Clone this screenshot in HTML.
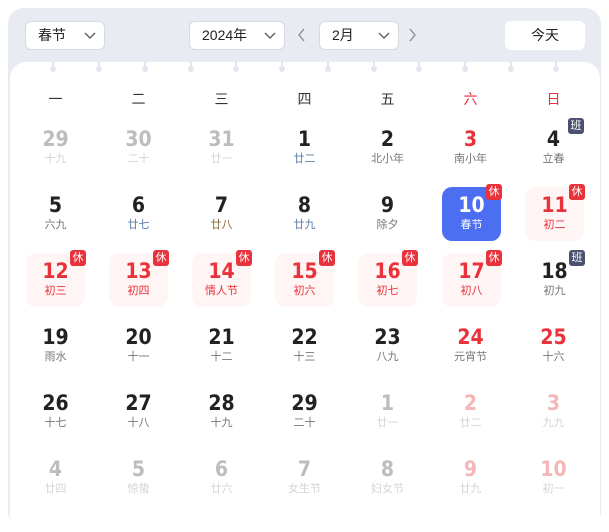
<!DOCTYPE html><html><head><meta charset="utf-8"><style>
*{margin:0;padding:0;box-sizing:border-box}
body{width:609px;height:513px;background:#fff;font-family:"Liberation Sans","Noto Sans CJK SC",sans-serif;position:relative;overflow:hidden}
.outer{position:absolute;left:8px;top:8px;width:593px;height:520px;background:#e8ebf2;border-radius:16px}
.card{position:absolute;left:10px;top:62px;width:590px;height:470px;background:#fff;border-radius:16px}
.sel{position:absolute;top:21px;height:29px;background:#fff;border:1px solid #d6d9e2;border-radius:6px;font-size:14px;color:#222;line-height:27px;padding-left:12px}
.sel svg{position:absolute;right:8px;top:10px}
.arr{position:absolute;top:28px}
.dot{position:absolute;top:62px;width:6px;height:11px}
.dot:before{content:"";position:absolute;left:2px;top:0;width:2px;height:6px;background:#e3e6ed}
.dot:after{content:"";position:absolute;left:0;top:4px;width:6px;height:6px;border-radius:50%;background:#e3e6ed}
.wk{position:absolute;top:89px;width:83px;text-align:center;font-size:14px;color:#333}
.c{position:absolute;width:59px;height:54px;text-align:center;border-radius:10px}
.c b{display:block;font-size:21px;line-height:26px;margin-top:5px;color:#222;font-family:"DejaVu Sans Condensed","Liberation Sans",sans-serif;font-weight:bold}
.c i{display:block;font-style:normal;font-size:11px;line-height:14px;color:#777}
.g b{color:#bdbdbd}.g i{color:#d4d4d4}
.gr b{color:#f4b6b6}.gr i{color:#d4d4d4}
.r b{color:#e8323c}
.h{background:#fff5f4}.h b{color:#e8323c}.h i{color:#e8323c}
.bl i{color:#5b7fa6}
.t{background:#4c6ef0}.t b,.t i{color:#fff}
.bg{position:absolute;right:-1px;top:-3px;width:16px;height:16px;border-radius:3px;background:#e8323c;color:#fff;font-size:11px;line-height:16px;font-style:normal}
.ban{background:#4b5270}
</style></head><body>
<div class="outer"></div>
<div class="sel" style="left:25px;width:80px">春节<svg width="12" height="8"><path d="M1 1l5 5 5-5" stroke="#555" fill="none" stroke-width="1.3"/></svg></div>
<div class="sel" style="left:189px;width:96px">2024年<svg width="12" height="8"><path d="M1 1l5 5 5-5" stroke="#555" fill="none" stroke-width="1.3"/></svg></div>
<svg class="arr" style="left:298px" width="8" height="14"><path d="M6 1L1 7l5 6" stroke="#888" fill="none" stroke-width="1.3"/></svg>
<div class="sel" style="left:319px;width:80px">2月<svg width="12" height="8"><path d="M1 1l5 5 5-5" stroke="#555" fill="none" stroke-width="1.3"/></svg></div>
<svg class="arr" style="left:409px" width="8" height="14"><path d="M1 1l5 6-5 6" stroke="#888" fill="none" stroke-width="1.3"/></svg>
<div class="sel" style="left:505px;width:80px;border-color:#fff;text-align:center;padding:0">今天</div>
<div class="card"></div>
<div class="dot" style="left:50px"></div><div class="dot" style="left:96px"></div><div class="dot" style="left:142px"></div><div class="dot" style="left:188px"></div><div class="dot" style="left:233px"></div><div class="dot" style="left:279px"></div><div class="dot" style="left:325px"></div><div class="dot" style="left:371px"></div><div class="dot" style="left:416px"></div><div class="dot" style="left:462px"></div><div class="dot" style="left:508px"></div><div class="dot" style="left:553px"></div>
<div class="wk" style="left:14px">一</div><div class="wk" style="left:97px">二</div><div class="wk" style="left:180px">三</div><div class="wk" style="left:263px">四</div><div class="wk" style="left:346px">五</div><div class="wk" style="left:429px;color:#e8323c">六</div><div class="wk" style="left:512px;color:#e8323c">日</div>

<div class="c g" style="left:26px;top:121px"><b>29</b><i>十九</i></div>
<div class="c g" style="left:109px;top:121px"><b>30</b><i>二十</i></div>
<div class="c g" style="left:192px;top:121px"><b>31</b><i>廿一</i></div>
<div class="c bl" style="left:275px;top:121px"><b>1</b><i>廿二</i></div>
<div class="c" style="left:358px;top:121px"><b>2</b><i>北小年</i></div>
<div class="c r" style="left:441px;top:121px"><b>3</b><i>南小年</i></div>
<div class="c" style="left:524px;top:121px"><b>4</b><i>立春</i><em class="bg ban">班</em></div>

<div class="c" style="left:26px;top:187px"><b>5</b><i>六九</i></div>
<div class="c bl" style="left:109px;top:187px"><b>6</b><i>廿七</i></div>
<div class="c" style="left:192px;top:187px"><b>7</b><i style="color:#8a6a3a">廿八</i></div>
<div class="c bl" style="left:275px;top:187px"><b>8</b><i>廿九</i></div>
<div class="c" style="left:358px;top:187px"><b>9</b><i>除夕</i></div>
<div class="c t" style="left:442px;top:187px"><b>10</b><i>春节</i><em class="bg">休</em></div>
<div class="c h" style="left:525px;top:187px"><b>11</b><i>初二</i><em class="bg">休</em></div>

<div class="c h" style="left:26px;top:253px"><b>12</b><i>初三</i><em class="bg">休</em></div>
<div class="c h" style="left:109px;top:253px"><b>13</b><i>初四</i><em class="bg">休</em></div>
<div class="c h" style="left:192px;top:253px"><b>14</b><i>情人节</i><em class="bg">休</em></div>
<div class="c h" style="left:275px;top:253px"><b>15</b><i>初六</i><em class="bg">休</em></div>
<div class="c h" style="left:358px;top:253px"><b>16</b><i>初七</i><em class="bg">休</em></div>
<div class="c h" style="left:442px;top:253px"><b>17</b><i>初八</i><em class="bg">休</em></div>
<div class="c" style="left:525px;top:253px"><b>18</b><i>初九</i><em class="bg ban">班</em></div>

<div class="c" style="left:26px;top:319px"><b>19</b><i>雨水</i></div>
<div class="c" style="left:109px;top:319px"><b>20</b><i>十一</i></div>
<div class="c" style="left:192px;top:319px"><b>21</b><i>十二</i></div>
<div class="c" style="left:275px;top:319px"><b>22</b><i>十三</i></div>
<div class="c" style="left:358px;top:319px"><b>23</b><i>八九</i></div>
<div class="c r" style="left:441px;top:319px"><b>24</b><i>元宵节</i></div>
<div class="c r" style="left:524px;top:319px"><b>25</b><i>十六</i></div>

<div class="c" style="left:26px;top:385px"><b>26</b><i>十七</i></div>
<div class="c" style="left:109px;top:385px"><b>27</b><i>十八</i></div>
<div class="c" style="left:192px;top:385px"><b>28</b><i>十九</i></div>
<div class="c" style="left:275px;top:385px"><b>29</b><i>二十</i></div>
<div class="c g" style="left:358px;top:385px"><b>1</b><i>廿一</i></div>
<div class="c gr" style="left:441px;top:385px"><b>2</b><i>廿二</i></div>
<div class="c gr" style="left:524px;top:385px"><b>3</b><i>九九</i></div>

<div class="c g" style="left:26px;top:451px"><b>4</b><i>廿四</i></div>
<div class="c g" style="left:109px;top:451px"><b>5</b><i>惊蛰</i></div>
<div class="c g" style="left:192px;top:451px"><b>6</b><i>廿六</i></div>
<div class="c g" style="left:275px;top:451px"><b>7</b><i>女生节</i></div>
<div class="c g" style="left:358px;top:451px"><b>8</b><i>妇女节</i></div>
<div class="c gr" style="left:441px;top:451px"><b>9</b><i>廿九</i></div>
<div class="c gr" style="left:524px;top:451px"><b>10</b><i>初一</i></div>
</body></html>
